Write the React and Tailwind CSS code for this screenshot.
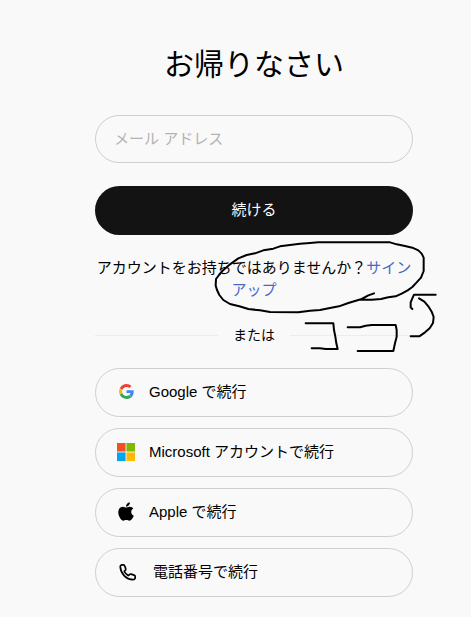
import React, { useState } from 'react';

const GoogleIcon = () => (
    <svg viewBox="0 0 48 48" className="w-[15px] h-[15px]" aria-hidden="true">
        <path fill="#EA4335" d="M24 9.5c3.54 0 6.71 1.22 9.21 3.6l6.85-6.85C35.9 2.38 30.47 0 24 0 14.62 0 6.51 5.38 2.56 13.22l7.98 6.19C12.43 13.72 17.74 9.5 24 9.5z" />
        <path fill="#4285F4" d="M46.98 24.55c0-1.57-.15-3.09-.38-4.55H24v9.02h12.94c-.58 2.96-2.26 5.48-4.78 7.18l7.73 6c4.51-4.18 7.09-10.36 7.09-17.65z" />
        <path fill="#FBBC05" d="M10.53 28.59c-.48-1.45-.76-2.99-.76-4.59s.27-3.14.76-4.59l-7.98-6.19C.92 16.46 0 20.12 0 24c0 3.88.92 7.54 2.56 10.78l7.97-6.19z" />
        <path fill="#34A853" d="M24 48c6.48 0 11.93-2.13 15.89-5.81l-7.73-6c-2.15 1.45-4.92 2.3-8.16 2.3-6.26 0-11.57-4.22-13.47-9.91l-7.98 6.19C6.51 42.62 14.62 48 24 48z" />
    </svg>
);

const MicrosoftIcon = () => (
    <svg viewBox="0 0 21 21" className="w-[18px] h-[18px]" aria-hidden="true">
        <path fill="#f25022" d="M0 0h10v10H0z" />
        <path fill="#7fba00" d="M11 0h10v10H11z" />
        <path fill="#00a4ef" d="M0 11h10v10H0z" />
        <path fill="#ffb900" d="M11 11h10v10H11z" />
    </svg>
);

const AppleIcon = () => (
    <svg viewBox="0 0 384 512" className="w-[18px] h-[21px]" fill="currentColor" aria-hidden="true">
        <path d="M318.7 268.7c-.2-36.7 16.4-64.4 50-84.8-18.8-26.9-47.2-41.7-84.7-44.6-35.5-2.8-74.3 20.7-88.5 20.7-15 0-49.4-19.7-76.4-19.7C63.3 141.2 4 184.8 4 273.5q0 39.3 14.4 81.2c12.8 36.7 59 126.7 107.2 125.2 25.2-.6 43-17.9 75.8-17.9 31.8 0 48.3 17.9 76.4 17.9 48.6-.7 90.4-82.5 102.6-119.3-65.2-30.7-61.7-90-61.7-91.9zm-56.6-164.2c27.3-32.4 24.8-61.9 24-72.5-24.1 1.4-52 16.4-67.9 34.9-17.5 19.8-27.8 44.3-25.6 71.9 26.1 2 49.9-11.4 69.5-34.3z" />
    </svg>
);

const PhoneIcon = () => (
    <svg
        viewBox="0 0 22 22"
        className="w-[22px] h-[22px]"
        fill="none"
        stroke="currentColor"
        strokeWidth="1.7"
        strokeLinejoin="round"
        aria-hidden="true"
    >
        <path d="M3.300 6.200C3.100 4.800 3.900 3.800 5.200 3.800H6.300C7 3.800 7.600 4.200 7.800 4.900L8.700 7.800C8.900 8.400 8.700 9 8.200 9.400L7.700 9.800C7.300 10.100 7.200 10.500 7.500 10.900C8.400 12.300 9.500 13.400 10.900 14.300C11.300 14.600 11.700 14.500 12 14.100L12.400 13.600C12.800 13.100 13.400 12.900 14 13.100L17.100 14.100C17.800 14.300 18.200 14.900 18.200 15.600V16.600C18.200 17.900 17.200 18.800 15.800 18.700C9.200 18.200 3.900 12.900 3.300 6.200Z" />
    </svg>
);

const providers = [
    { name: 'google', label: 'Google で続行', Icon: GoogleIcon, slot: 'w-[18px]' },
    { name: 'microsoft', label: 'Microsoft アカウントで続行', Icon: MicrosoftIcon, slot: 'w-[18px]' },
    { name: 'apple', label: 'Apple で続行', Icon: AppleIcon, slot: 'w-[18px]' },
    { name: 'phone', label: '電話番号で続行', Icon: PhoneIcon, slot: 'w-[22px]' }
];

// Hand-drawn marker: circle round the sign-up link, "ここ" and an arrow
const Scribble = () => (
    <svg
        viewBox="0 0 720 360"
        className="absolute left-[110px] -top-[22px] w-[240px] h-[120px] pointer-events-none"
        fill="none"
        stroke="#000"
        strokeWidth="6"
        strokeLinecap="round"
        strokeLinejoin="round"
        aria-hidden="true"
    >
        <path d="M507 175L490 181L470 192L430 204L402 214L375 219L345 225L315 227L280 232L195 231L165 226L130 222L103 214L75 207L55 195L43 180L36 165L32 152L33 132L42 120L52 108L75 88L100 70L125 60L150 55L175 46L205 41L225 34L255 30L285 26L315 24L340 22H555L575 28L600 33L622 38L640 46L650 56L656 68V108L648 128L635 142L622 156L608 166L590 176L572 184L550 187L528 192L500 194H468" />
        <path d="M302 265H385L387 285L391 305L394 325L398 342H362L345 340H320" />
        <path d="M428 277H465L482 272L500 270H572L575 285V305L570 325L565 348H458" />
        <path d="M692 179H627L622 190L617 202V217L622 222" />
        <path d="M642 190L658 200L670 214L680 230L686 246L684 264L674 280L660 292L643 304H617" />
    </svg>
);

const App = () => {
    const [email, setEmail] = useState('');

    return (
        <main className="min-h-screen bg-[#f9f9f9] pt-11 pb-5 pl-[95px] pr-[58px] text-[15px] leading-[22px] text-black font-['Liberation_Sans','Noto_Sans_CJK_JP',sans-serif]">
            <h1 className="text-center text-[30px] leading-[42px]">お帰りなさい</h1>

            <form className="mt-[29px]" onSubmit={(e) => e.preventDefault()}>
                <input
                    type="email"
                    aria-label="メール アドレス"
                    placeholder="メール アドレス"
                    value={email}
                    onChange={(e) => setEmail(e.target.value)}
                    className="block w-full h-12 px-[18px] pb-[2px] rounded-full border border-[#cfcfcf] bg-transparent outline-none placeholder:text-[#b3b3b3]"
                />
                <button type="submit" className="block w-full h-[49px] mt-[23px] pb-[2px] rounded-full bg-[#131313] text-white">
                    続ける
                </button>
            </form>

            <div className="relative mt-[22px]">
                <p className="text-center">
                    アカウントをお持ちではありませんか？
                    <a href="#signup" className="text-[#4a68c8]">サインアップ</a>
                </p>
                <Scribble />
            </div>

            <div className="flex items-center gap-[15px] mt-[23px]">
                <div className="flex-1 h-px bg-[#ececec]"></div>
                <span className="text-[14px]">または</span>
                <div className="flex-1 h-px bg-[#ececec]"></div>
            </div>

            {/* Other sign-in methods */}
            <div className="flex flex-col gap-[11px] mt-[22px]">
                {providers.map(({ name, label, Icon, slot }) => (
                    <button
                        key={name}
                        type="button"
                        className="flex items-center gap-[14px] w-full h-[49px] px-[21px] pb-[2px] rounded-full border border-[#cfcfcf] text-left"
                    >
                        <span className={`flex justify-center shrink-0 ${slot}`}>
                            <Icon />
                        </span>
                        <span>{label}</span>
                    </button>
                ))}
            </div>
        </main>
    );
};

export default App;
